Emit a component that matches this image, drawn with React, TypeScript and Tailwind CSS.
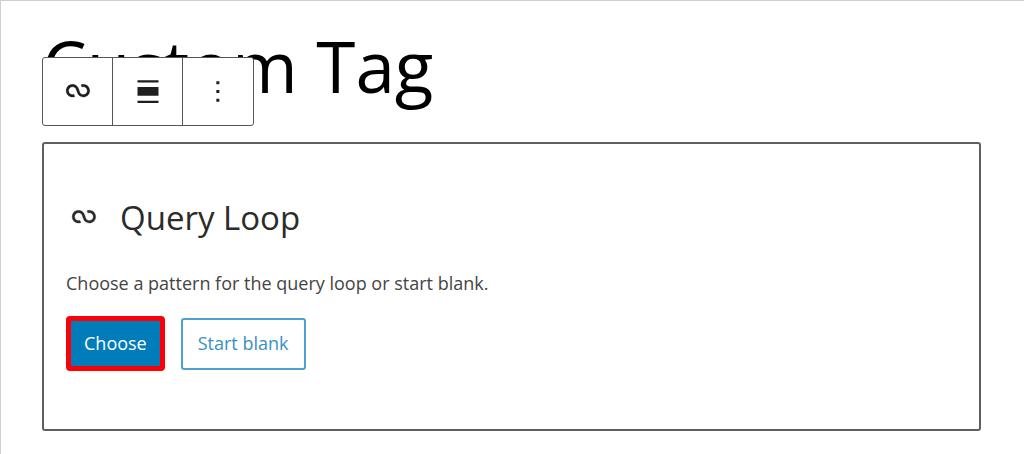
import type { ReactNode } from 'react'

function LoopIcon({ className }: { className?: string }) {
  return (
    <svg viewBox="0 0.5 24 24" aria-hidden="true" className={className} fill="currentColor" stroke="currentColor" strokeWidth="0.2">
      <path d="M18.1823 11.6392C18.1823 13.0804 17.0139 14.2487 15.5727 14.2487C14.3579 14.2487 13.335 13.4179 13.0453 12.2922L13.0377 12.2625L13.0278 12.2335L12.3985 10.377L12.3942 10.3785C11.8571 8.64997 10.246 7.39405 8.33961 7.39405C5.99509 7.39405 4.09448 9.29465 4.09448 11.6392C4.09448 13.9837 5.99509 15.8843 8.33961 15.8843C8.88499 15.8843 9.40822 15.781 9.88943 15.5923L9.29212 14.0697C8.99812 14.185 8.67729 14.2487 8.33961 14.2487C6.89838 14.2487 5.73003 13.0804 5.73003 11.6392C5.73003 10.1979 6.89838 9.02959 8.33961 9.02959C9.55444 9.02959 10.5773 9.86046 10.867 10.9862L10.8772 10.9836L11.4695 12.7311C11.9515 14.546 13.6048 15.8843 15.5727 15.8843C17.9172 15.8843 19.8178 13.9837 19.8178 11.6392C19.8178 9.29465 17.9172 7.39404 15.5727 7.39404C15.0287 7.39404 14.5066 7.4968 14.0264 7.6847L14.6223 9.20781C14.9158 9.093 15.2358 9.02959 15.5727 9.02959C17.0139 9.02959 18.1823 10.1979 18.1823 11.6392Z" />
    </svg>
  )
}

function ToolbarButton({ label, children }: { label: string; children: ReactNode }) {
  return (
    <button
      type="button"
      aria-label={label}
      className="flex w-[70px] items-center justify-center border-r border-[#555] last:border-r-0"
    >
      {children}
    </button>
  )
}

function BlockToolbar() {
  return (
    <div
      role="toolbar"
      aria-label="Block tools"
      className="absolute top-[27px] left-0 flex h-[69px] rounded-[3px] border border-[#555] bg-white text-[#1e1e1e]"
    >
      <ToolbarButton label="Query Loop">
        <LoopIcon className="size-9" />
      </ToolbarButton>
      <ToolbarButton label="Align">
        <svg viewBox="0 0 24 24" aria-hidden="true" className="size-9" fill="currentColor">
          <path d="M5 4.1h14v1.5H5zM5 8.6h14v5.9H5zM5 17.9h14v1.5H5z" />
        </svg>
      </ToolbarButton>
      <ToolbarButton label="Options">
        <svg viewBox="0 0 24 24" aria-hidden="true" className="size-9" fill="currentColor">
          <path d="M10.9 4.9h2v2h-2zM10.9 10.7h2v2h-2zM10.9 16.5h2v2h-2z" />
        </svg>
      </ToolbarButton>
    </div>
  )
}

export default function App() {
  return (
    <main className="min-h-screen border-t border-l border-[#d0d0d0] bg-white pt-[29px] pr-[43px] pb-5 pl-[41px] font-['Open_Sans','Noto_Sans',sans-serif]">
      <header className="relative">
        <h1 className="h-28 text-[71px] leading-[72px] text-black">Custom Tag</h1>
        <BlockToolbar />
      </header>

      <section className="rounded-[3px] border-2 border-[#5f5f5f] px-[22px] pt-[49px] pb-[58px]">
        <h2 className="flex items-center gap-[18px] text-[33px] leading-[50px] text-[#2b2b2b]">
          <LoopIcon className="size-9" />
          Query Loop
        </h2>
        <p className="mt-6 text-[18px] leading-8 text-[#444]">
          Choose a pattern for the query loop or start blank.
        </p>
        <div className="mt-[17px] flex items-center gap-4 text-[18px]">
          <button type="button" className="h-[55px] rounded-sm border-5 border-[#fb0007] bg-[#007cba] px-[13px] text-white">
            Choose
          </button>
          <button type="button" className="h-[52px] rounded-[3px] border-2 border-[#4aa3cf] px-[15px] text-[#3a8fc4]">
            Start blank
          </button>
        </div>
      </section>
    </main>
  )
}
